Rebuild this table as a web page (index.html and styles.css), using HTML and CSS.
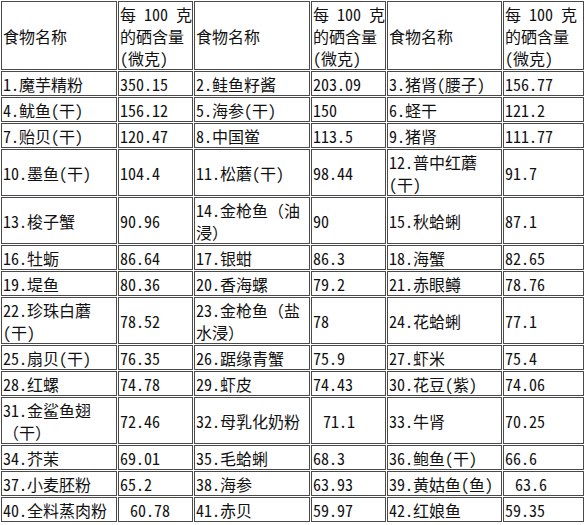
FILE: index.html
```html
<!DOCTYPE html>
<html lang="zh-CN">
<head>
<meta charset="utf-8">
<title>食物硒含量表</title>
<link rel="stylesheet" href="styles.css">
</head>
<body>
<table class="se-table">
  <colgroup>
    <col class="c-name1"><col class="c-val1"><col class="c-name2"><col class="c-val2"><col class="c-name3"><col class="c-val3">
  </colgroup>
  <tbody>
    <tr class="head">
      <td>食物名称</td><td>每 100 克<br>的硒含量<br>(微克)</td>
      <td>食物名称</td><td>每 100 克<br>的硒含量<br>(微克)</td>
      <td>食物名称</td><td>每 100 克<br>的硒含量<br>(微克)</td>
    </tr>
    <tr><td>1.魔芋精粉</td><td>350.15</td><td>2.鲑鱼籽酱</td><td>203.09</td><td>3.猪肾(腰子)</td><td>156.77</td></tr>
    <tr><td>4.鱿鱼(干)</td><td>156.12</td><td>5.海参(干)</td><td>150</td><td>6.蛏干</td><td>121.2</td></tr>
    <tr><td>7.贻贝(干)</td><td>120.47</td><td>8.中国鲎</td><td>113.5</td><td>9.猪肾</td><td>111.77</td></tr>
    <tr><td>10.墨鱼(干)</td><td>104.4</td><td>11.松蘑(干)</td><td>98.44</td><td>12.普中红蘑<br>(干)</td><td>91.7</td></tr>
    <tr><td>13.梭子蟹</td><td>90.96</td><td>14.金枪鱼<span class="fw">（油</span><br><span class="fw">浸）</span></td><td>90</td><td>15.秋蛤蜊</td><td>87.1</td></tr>
    <tr><td>16.牡蛎</td><td>86.64</td><td>17.银蚶</td><td>86.3</td><td>18.海蟹</td><td>82.65</td></tr>
    <tr><td>19.堤鱼</td><td>80.36</td><td>20.香海螺</td><td>79.2</td><td>21.赤眼鳟</td><td>78.76</td></tr>
    <tr><td>22.珍珠白蘑<br>(干)</td><td>78.52</td><td>23.金枪鱼<span class="fw">（盐</span><br><span class="fw">水浸）</span></td><td>78</td><td>24.花蛤蜊</td><td>77.1</td></tr>
    <tr><td>25.扇贝(干)</td><td>76.35</td><td>26.踞缘青蟹</td><td>75.9</td><td>27.虾米</td><td>75.4</td></tr>
    <tr><td>28.红螺</td><td>74.78</td><td>29.虾皮</td><td>74.43</td><td>30.花豆(紫)</td><td>74.06</td></tr>
    <tr><td>31.金鲨鱼翅<br><span class="fw">（干）</span></td><td>72.46</td><td>32.母乳化奶粉</td><td><span class="indent">71.1</span></td><td>33.牛肾</td><td>70.25</td></tr>
    <tr><td>34.芥茉</td><td>69.01</td><td>35.毛蛤蜊</td><td>68.3</td><td>36.鲍鱼(干)</td><td>66.6</td></tr>
    <tr><td>37.小麦胚粉</td><td>65.2</td><td>38.海参</td><td>63.93</td><td>39.黄姑鱼(鱼)</td><td><span class="indent">63.6</span></td></tr>
    <tr><td>40.全料蒸肉粉</td><td><span class="indent">60.78</span></td><td>41.赤贝</td><td>59.97</td><td>42.红娘鱼</td><td>59.35</td></tr>
  </tbody>
</table>
</body>
</html>
```
FILE: styles.css
```css
html, body {
  margin: 0;
  padding: 0;
  background: #fff;
  overflow: hidden;
}

.se-table {
  table-layout: fixed;
  width: 585px;
  border-collapse: separate;
  border-spacing: 1px;
  font-family: "Noto Sans CJK SC", "Noto Sans CJK JP", sans-serif;
  font-feature-settings: "hwid" 1;
  font-size: 16px;
  line-height: 22px;
  color: #111;
}

.c-name1 { width: 116px; }
.c-val1 { width: 75px; }
.c-name2 { width: 116px; }
.c-val2 { width: 75px; }
.c-name3 { width: 115px; }
.c-val3 { width: 81px; }

.se-table td {
  border: 1px solid #4a4a4a;
  padding: 1px 0 0 1px;
  vertical-align: middle;
  text-align: left;
  white-space: nowrap;
  overflow: hidden;
}

.fw {
  font-feature-settings: normal;
}

.indent {
  padding-left: 10px;
}
```
